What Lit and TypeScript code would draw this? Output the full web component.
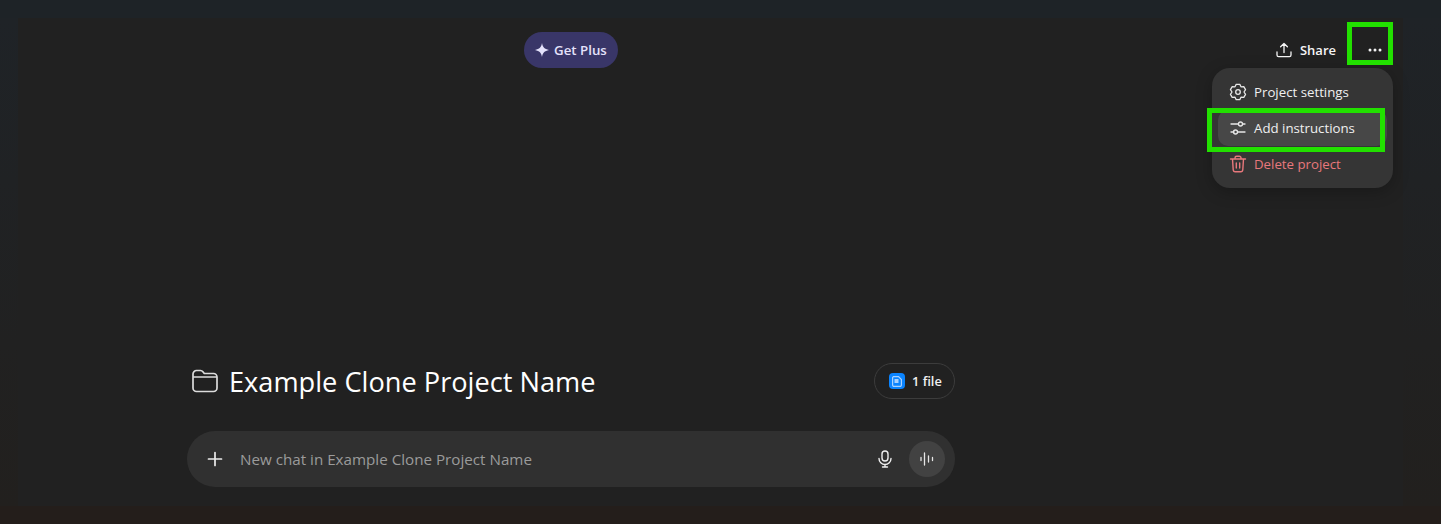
import { LitElement, html, css } from "lit";
import { customElement } from "lit/decorators.js";

const gearPath = (() => {
  const pts: string[] = [];
  const polar = (r: number, deg: number) => {
    const a = (deg * Math.PI) / 180;
    return `${(9 + r * Math.cos(a)).toFixed(2)} ${(9 + r * Math.sin(a)).toFixed(2)}`;
  };
  for (let i = 0; i < 6; i++) {
    const c = -90 + i * 60;
    pts.push(polar(7.9, c - 13), polar(7.9, c + 13), polar(6, c + 30));
  }
  return "M" + pts.join("L") + "Z";
})();

@customElement("app-root")
export class AppRoot extends LitElement {
  static styles = css`
    :host { display: block; }
    * { box-sizing: border-box; }
    .page {
      position: relative; width: 1441px; height: 524px; overflow: hidden;
      display: flex; flex-direction: column;
      font-family: "Open Sans", "Noto Sans", sans-serif; color: #fff;
      background: linear-gradient(#1e2327, #1e2327 18px, #212121 18px, #212121 506px, #241e1b 506px);
    }
    .edges { position: absolute; inset: 18px 0; pointer-events: none;
      background:
        linear-gradient(#1f2327, #22201e 100%) left / 18px 100% no-repeat,
        linear-gradient(#1f2327, #22201e 100%) right / 38px 100% no-repeat; }
    .bar { position: relative; display: flex; align-items: center; height: 36px; margin-top: 32px; padding-left: 524px; padding-right: 48px; }
    .plus { display: flex; align-items: center; gap: 5px; height: 36px; width: 94px; padding-left: 11px; border-radius: 18px; background: #393668; color: #e4e2fb; font-size: 13.3px; font-weight: 600; }
    .share { margin-left: auto; display: flex; align-items: center; gap: 8px; font-size: 13px; font-weight: 600; color: #f5f5f5; }
    .dots { display: flex; justify-content: center; align-items: center; width: 36px; height: 36px; margin-left: 21px; }
    .main { position: relative; margin-top: auto; margin-left: 187px; width: 768px; padding-bottom: 37px; display: flex; flex-direction: column; gap: 32px; }
    .title-row { display: flex; align-items: center; height: 36px; padding-left: 3px; }
    h1 { margin: 2px 0 0 9px; font-size: 27.2px; font-weight: 400; line-height: 36px; color: #fff; }
    .files { margin-left: auto; display: flex; align-items: center; gap: 7px; height: 36px; width: 81px; padding-left: 14px; border: 1px solid #3c3c3c; border-radius: 18px; font-size: 12.8px; font-weight: 600; color: #f0f0f0; }
    .fileicon { display: flex; align-items: center; justify-content: center; width: 16px; height: 16px; border-radius: 4px; background: #0a84ff; }
    .composer { display: flex; align-items: center; height: 56px; border-radius: 28px; background: #303030; padding: 0 10px 0 19px; }
    .placeholder { margin-left: 16px; font-size: 15.2px; color: #9b9b9b; }
    .mic { margin-left: auto; display: flex; }
    .voice { display: flex; align-items: center; justify-content: center; width: 36px; height: 36px; margin-left: 16px; border-radius: 50%; background: #424242; }
    .menu { position: absolute; left: 1212px; top: 68px; width: 181px; height: 120px; padding: 6px; border-radius: 18px; background: #353535; box-shadow: 0 4px 16px rgba(0,0,0,.25); display: flex; flex-direction: column; }
    .item { display: flex; align-items: center; gap: 7px; height: 36px; padding-left: 11px; border-radius: 10px; font-size: 13.25px; color: #f0f0f0; }
    .item.active { background: #474747; }
    .item.danger { color: #e8787c; }
    .mark { position: absolute; border: 5px solid #22e000; pointer-events: none; }
    .mark.a { left: 1347px; top: 22px; width: 46px; height: 43px; }
    .mark.b { left: 1207px; top: 108px; width: 178px; height: 44px; }
    svg { display: block; flex: none; }
  `;

  render() {
    return html`
      <div class="page">
        <div class="edges"></div>
        <div class="bar">
          <div class="plus">
            <svg width="14" height="14" viewBox="0 0 14 14"><path fill="#e4e2fb" d="M7 0c.7 4.200 2.400 6 7 7-4.600 1-6.300 2.800-7 7-.7-4.200-2.400-6-7-7 4.600-1 6.300-2.800 7-7z"/></svg>
            Get Plus
          </div>
          <div class="share">
            <svg width="16" height="16" viewBox="0 0 16 16" fill="none" stroke="#f5f5f5" stroke-width="1.300" stroke-linecap="round" stroke-linejoin="round"><path d="M8 10.500V1.500M4.600 4.800 8 1.500l3.400 3.300M1 10v3a1.600 1.600 0 0 0 1.600 1.600h10.800A1.600 1.600 0 0 0 15 13v-3"/></svg>
            Share
          </div>
          <div class="dots">
            <svg width="14" height="4" viewBox="0 0 14 4" fill="#f2f2f2"><circle cx="2" cy="2" r="1.500"/><circle cx="7" cy="2" r="1.500"/><circle cx="12" cy="2" r="1.500"/></svg>
          </div>
        </div>
        <div class="main">
          <div class="title-row">
            <svg width="30" height="24" viewBox="0 0 30 24" fill="none" stroke="#dcdcdc" stroke-width="1.700" stroke-linejoin="round"><path d="M3 7V5A3.500 3.500 0 0 1 6.500 1.500h4c1 0 1.800.4 2.400 1.200L14.300 4.500H23.500A3.500 3.500 0 0 1 27 8v11a3.500 3.500 0 0 1-3.500 3.500h-17A3.500 3.500 0 0 1 3 19V7zM3 8h24"/></svg>
            <h1>Example Clone Project Name</h1>
            <div class="files">
              <span class="fileicon"><svg width="10" height="11" viewBox="0 0 10 11" fill="none"><path stroke="#a9d2ff" stroke-width="1.200" d="M1.500.6H6.500L9.400 3.500v5.500a1.400 1.400 0 0 1-1.400 1.400H2A1.400 1.400 0 0 1 .6 9V1.500z"/><rect x="2.500" y="3" width="4" height="4" fill="#a9d2ff"/></svg></span>
              1 file
            </div>
          </div>
          <div class="composer">
            <svg width="18" height="18" viewBox="0 0 18 18" stroke="#ececec" stroke-width="1.700" stroke-linecap="round"><path d="M9 2.500v13M2.500 9h13"/></svg>
            <span class="placeholder">New chat in Example Clone Project Name</span>
            <span class="mic"><svg width="16" height="18" viewBox="0 0 16 18" fill="none" stroke="#eee" stroke-width="1.400" stroke-linecap="round"><rect x="5" y="1" width="6" height="10" rx="3"/><path d="M2 8.500a6 6 0 0 0 12 0M8 14.500V17M5.500 17h5"/></svg></span>
            <span class="voice"><svg width="14" height="14" viewBox="0 0 14 14" stroke="#e6e6e6" stroke-width="1.300" stroke-linecap="round"><path d="M1 5.500v3M4.500 1v12M8.500 4v6M12.500 5.500v3"/></svg></span>
          </div>
        </div>
        <div class="menu">
          <div class="item">
            <svg width="18" height="18" viewBox="0 0 18 18" fill="none" stroke="#e8e8e8" stroke-width="1.300" stroke-linejoin="round"><path d="${gearPath}"/><circle cx="9" cy="9" r="2.300"/></svg>
            Project settings
          </div>
          <div class="item active">
            <svg width="18" height="18" viewBox="0 0 18 18" fill="none" stroke="#e8e8e8" stroke-width="1.300" stroke-linecap="round"><path d="M2 5h7.500M13.500 5H16M2 13h3M8.500 13H16"/><circle cx="11.500" cy="5" r="2"/><circle cx="6.500" cy="13" r="2"/></svg>
            Add instructions
          </div>
          <div class="item danger">
            <svg width="18" height="18" viewBox="0 0 18 18" fill="none" stroke="#e8787c" stroke-width="1.400" stroke-linecap="round" stroke-linejoin="round"><path d="M1.500 4h15M6 4V3a1.700 1.700 0 0 1 1.700-1.700h2.600A1.700 1.700 0 0 1 12 3v1M3.500 4l.7 10.800A2 2 0 0 0 6.200 16.700h5.600a2 2 0 0 0 2-1.900L14.500 4M7.300 8v5M10.700 8v5"/></svg>
            Delete project
          </div>
        </div>
        <div class="mark a"></div>
        <div class="mark b"></div>
      </div>
    `;
  }
}
